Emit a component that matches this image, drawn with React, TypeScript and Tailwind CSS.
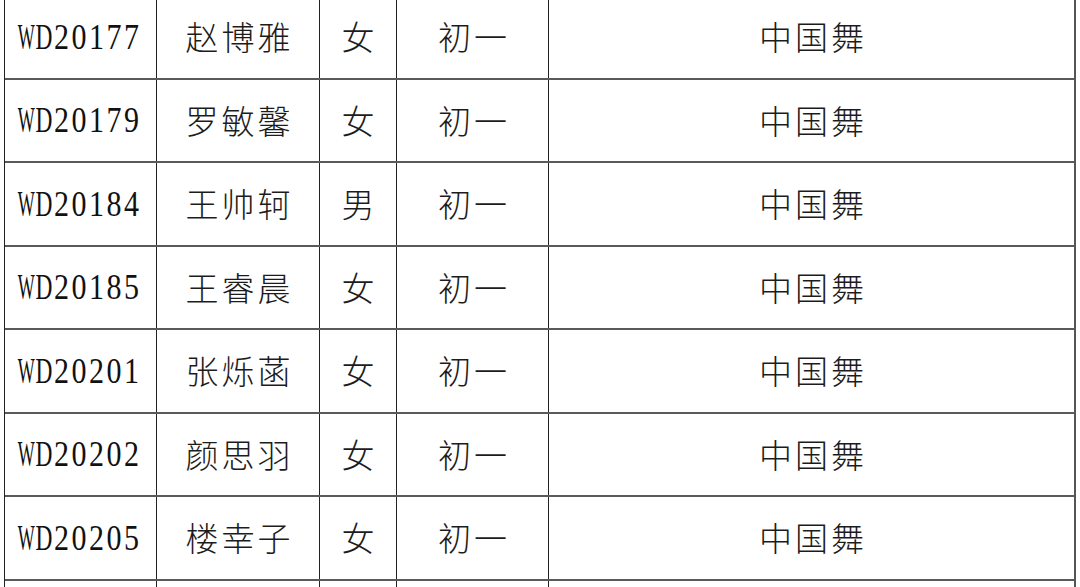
import React from "react";

const rows = [
  ["WD20177", "赵博雅", "女", "初一", "中国舞"],
  ["WD20179", "罗敏馨", "女", "初一", "中国舞"],
  ["WD20184", "王帅轲", "男", "初一", "中国舞"],
  ["WD20185", "王睿晨", "女", "初一", "中国舞"],
  ["WD20201", "张烁菡", "女", "初一", "中国舞"],
  ["WD20202", "颜思羽", "女", "初一", "中国舞"],
  ["WD20205", "楼幸子", "女", "初一", "中国舞"],
  ["", "", "", "", ""],
];

const cjk =
  "font-['Noto_Sans_CJK_SC',sans-serif] font-extralight text-[33px] leading-none text-[#1c1c1c] tracking-[3px] pl-[3px]";

function glyphClass(c: string) {
  if (c === "W") return "scale-x-[0.6]";
  if (c === "D") return "scale-x-[0.78]";
  return "";
}

function Mono({ text }: { text: string }) {
  return (
    <span className="flex font-['Liberation_Serif',serif] text-[30px] leading-none text-[#111] scale-y-[1.2]">
      {text.split("").map((c, i) => (
        <span key={i} className="flex w-[17.5px] justify-center">
          <span className={`inline-block ${glyphClass(c)}`}>{c}</span>
        </span>
      ))}
    </span>
  );
}

export default function App() {
  return (
    <div className="w-[1080px] h-[587px] overflow-hidden bg-white">
      <div className="ml-[4px] mt-[-4px] w-[1072px] border-l border-l-[#222] border-r-2 border-r-[#555]">
        {rows.map((r, i) => (
          <div
            key={i}
            className="grid grid-cols-[152px_163px_77px_152px_525px] h-[83.5px] border-b-2 border-b-[#5a5a5a]"
          >
            <div className="flex items-center justify-center border-r border-r-[#222] pr-[3px]">
              <Mono text={r[0]} />
            </div>
            <div className="flex items-center justify-center border-r border-r-[#222]">
              <span className={cjk}>{r[1]}</span>
            </div>
            <div className="flex items-center justify-center border-r border-r-[#222]">
              <span className={cjk}>{r[2]}</span>
            </div>
            <div className="flex items-center justify-center border-r border-r-[#222]">
              <span className={cjk}>{r[3]}</span>
            </div>
            <div className="flex items-center justify-center">
              <span className={cjk}>{r[4]}</span>
            </div>
          </div>
        ))}
      </div>
    </div>
  );
}
